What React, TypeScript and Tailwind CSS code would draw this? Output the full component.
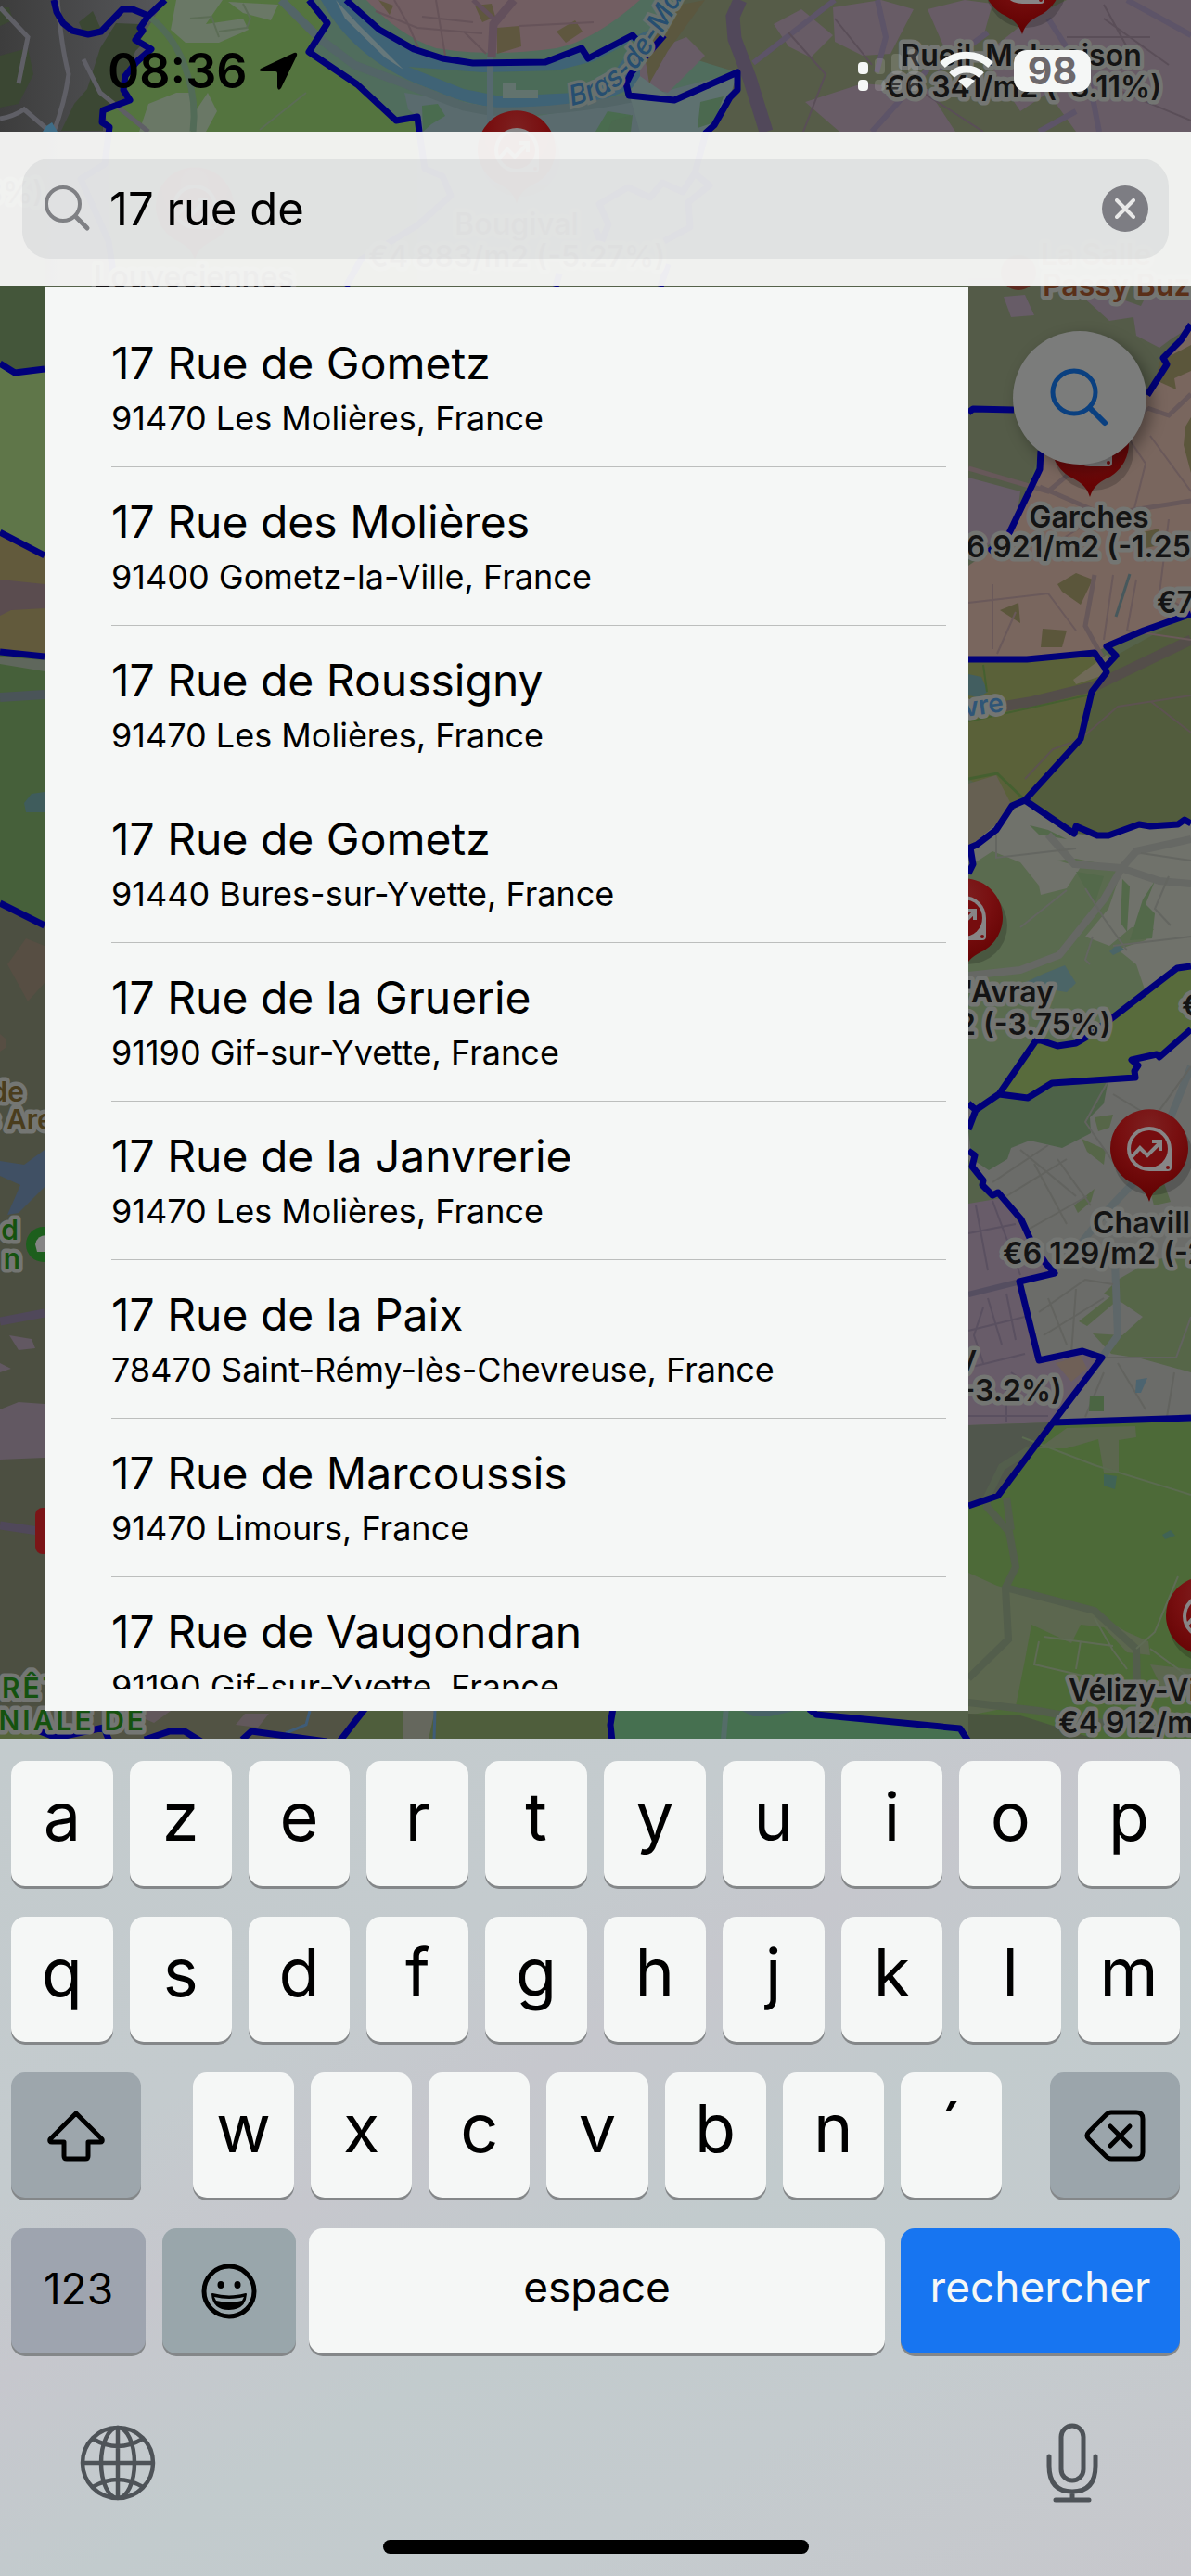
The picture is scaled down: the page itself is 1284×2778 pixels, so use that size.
import { useId, type ReactNode } from "react";

const results = [
  { street: "17 Rue de Gometz", city: "91470 Les Molières, France" },
  { street: "17 Rue des Molières", city: "91400 Gometz-la-Ville, France" },
  { street: "17 Rue de Roussigny", city: "91470 Les Molières, France" },
  { street: "17 Rue de Gometz", city: "91440 Bures-sur-Yvette, France" },
  { street: "17 Rue de la Gruerie", city: "91190 Gif-sur-Yvette, France" },
  { street: "17 Rue de la Janvrerie", city: "91470 Les Molières, France" },
  { street: "17 Rue de la Paix", city: "78470 Saint-Rémy-lès-Chevreuse, France" },
  { street: "17 Rue de Marcoussis", city: "91470 Limours, France" },
  { street: "17 Rue de Vaugondran", city: "91190 Gif-sur-Yvette, France" },
];

function Pin({ x, y }: { x: number; y: number }) {
  return (
    <g transform={`translate(${x} ${y})`}>
      <ellipse cx="4" cy="8" rx="43" ry="42" fill="#000" opacity="0.18" />
      <path
        d="M0 57C-4 44-12 40-22 35A42 42 0 1 1 22 35C12 40 4 44 0 57Z"
        fill="url(#pin-fill)"
      />
      <path
        d="M0-24A24 24 0 1 0 0 24H20Q24 24 24 20V0A24 24 0 0 0 0-24Z"
        fill="#878586"
      />
      <circle r="20" fill="#760d0f" />
      <circle cx="20" cy="20" r="2" fill="#760d0f" />
      <path
        d="M-20 10L-10-1L-2 7L12-7M3-8H12V2"
        fill="none"
        stroke="#878586"
        strokeWidth="4"
      />
    </g>
  );
}

type LabelProps = {
  x: number;
  y: number;
  anchor?: "start" | "middle" | "end";
  color?: string;
  size?: number;
  rotate?: number;
  halo?: string;
  children: ReactNode;
};

function Label({ x, y, anchor = "start", color = "#141414", size = 32, rotate = 0, halo = "#747673", children }: LabelProps) {
  return (
    <text
      x={x}
      y={y}
      textAnchor={anchor}
      fontSize={size}
      fontWeight="600"
      fill={color}
      stroke={halo}
      strokeWidth="9"
      strokeLinejoin="round"
      paintOrder="stroke"
      transform={`rotate(${rotate} ${x} ${y})`}
    >
      {children}
    </text>
  );
}

function MapBackground() {
  return (
    <svg
      viewBox="0 0 1284 1875"
      preserveAspectRatio="xMidYMin slice"
      className="absolute inset-0 h-full w-full"
      aria-hidden="true"
    >
      <defs>
        <radialGradient id="pin-fill" cx="0.5" cy="0.2" r="0.8">
          <stop offset="0" stopColor="#7d2020" />
          <stop offset="0.45" stopColor="#780f10" />
          <stop offset="1" stopColor="#600000" />
        </radialGradient>
        <linearGradient id="west" x1="0" x2="1" y1="0" y2="0">
          <stop offset="0" stopColor="#3d3d3d" />
          <stop offset="1" stopColor="#56575a" />
        </linearGradient>
        <path id="river-name" d="M616 114Q660 106 688 72T742 -16" />
      </defs>
      <rect width="1284" height="1875" fill="#55624a" />

      {/* north-west: town and forest */}
      <path d="M0 0H180L150 45L163 53L133 90L140 108L111 119L118 137V308H0Z" fill="url(#west)" />
      <path d="M0 60L30 52L36 80L20 112L0 116ZM108 52L125 25L150 26L156 45L146 55L133 92L140 108L111 119V141H66L80 112L94 96ZM85 24L100 12L110 34L92 40ZM0 8H10L14 22L0 28Z" fill="#3b4733" />
      <path d="M178 0H333L353 25L333 56L385 91L427 130L450 126V308H118V137L111 119L140 108L133 90L163 53L150 45Z" fill="#54743f" />
      <path d="M190 0H240L222 26L262 20L268 32L236 46H200L184 32ZM246 2L300 5L292 22L262 14ZM190 100H206V142H150L160 112ZM212 118L224 100L234 120L222 142H208Z" fill="#6a7866" />
      <path d="M262 4L270 20L266 30L236 34M330 100L280 140M205 20L228 18L236 40" fill="none" stroke="#5c6d56" strokeWidth="2" />
      <path d="M62 0Q66 50 74 80Q70 110 58 142M0 128Q14 126 26 118L54 142M90 64L108 100L160 142M0 8L30 40L20 90" fill="none" stroke="#5f5f66" strokeWidth="5" />
      <path d="M160 17Q190 40 202 80Q212 110 208 142" fill="none" stroke="#526b57" strokeWidth="7" />
      <path d="M50 136L56 132L62 142H46Z" fill="#3f6d87" />

      {/* the Seine and its island */}
      <path d="M333 0L353 25L333 56L385 91L427 130L450 126V200H800V0Z" fill="#506d5d" />
      <path d="M436 100L500 110L580 125L680 108L795 78L770 135L740 200H452L450 126L440 118Z" fill="#5a6b6e" />
      <path d="M455 114L472 112L480 125L465 134L456 142ZM510 82L560 80L600 92L570 106L530 102ZM655 120L680 124L676 142H642Z" fill="#4a6c4f" />
      <path d="M346 0H373L409 32L446 53L477 63L510 68L588 67L627 52L634 63L700 32L735 -5H775Q735 55 705 80Q660 112 600 118Q520 122 470 98Q385 70 346 0Z" fill="#3f6376" />
      <path d="M440 72L520 78L600 76L640 66L690 40L660 80L620 100L540 104L500 96Z" fill="#4b6b58" />
      <path d="M362 0L385 25L435 75L415 62L372 20Z" fill="#66787b" />
      <path d="M395 0Q430 38 470 52Q530 62 600 52Q640 44 690 0Z" fill="#725e62" />
      <path d="M512 6L530 4L534 18L520 24ZM536 30L560 28L562 50L536 58ZM600 34L620 22L628 34L610 46ZM408 0L424 6L420 16Z" fill="#5f573f" />
      <path d="M425 0L440 26L452 54M455 18L510 24M470 0L480 60M500 34L524 58M560 28L640 24M405 12L450 30L520 36" fill="none" stroke="#665359" strokeWidth="2" />
      <path d="M554 0L532 26L530 62" fill="none" stroke="#63505c" strokeWidth="9" />
      <path d="M510 0L534 22" fill="none" stroke="#63505c" strokeWidth="5" />
      <path d="M303 0L345 42L382 70L430 88L500 115L528 120Q600 122 680 106" fill="none" stroke="#536567" strokeWidth="9" />
      <path d="M528 62V142" fill="none" stroke="#56696f" strokeWidth="6" />
      <path d="M542 90H556V97H580V106H542Z" fill="#62736e" />

      {/* north-east suburbs */}
      <path d="M735 0H1284V142H765L795 78L720 55Z" fill="#565c48" />
      <path d="M834 26L864 10L898 38L874 62L850 50ZM898 8L950 0L985 10L960 58L930 60L900 45ZM868 110L930 90L1000 96L1030 142H905ZM1000 10L1040 0L1070 4L1060 40L1020 56ZM1110 20L1150 0H1284V142H1160L1130 100L1100 120L1060 60ZM690 60L740 40L760 60L720 100L690 92Z" fill="#685c66" />
      <path d="M693 48L735 5L760 0L720 55L700 90Z" fill="#5b573f" />
      <path d="M678 100L690 82L727 108L795 78L787 105L770 135L761 143H690Z" fill="#5e7170" />
      <path d="M660 130L682 124L680 142H655ZM755 110L780 104L770 132L752 138Z" fill="#4b694f" />
      <path d="M798 0L790 18L792 42L808 84L826 142" fill="none" stroke="#51485a" strokeWidth="15" />
      <path d="M812 68L900 0M946 0L955 40L945 78M1130 20L1175 90L1185 142M1000 75L940 142M1065 35L1010 75M1215 0L1284 38M1160 120L1120 142" fill="none" stroke="#5d5468" strokeWidth="6" />
      <path d="M850 35L890 80L866 142M900 20L940 70M980 90L1060 142M1190 5L1220 60M1150 40H1240M1190 20L1260 70M1200 95L1284 130" fill="none" stroke="#5a4e58" strokeWidth="2" />

      {/* western strip beside the results */}
      <path d="M0 280H48V398L16 402L0 392Z" fill="#44563a" />
      <path d="M0 392L16 402L48 398V599L0 574Z" fill="#5f7649" />
      <path d="M0 574L48 599V710L0 703Z" fill="#625a3c" />
      <path d="M0 625L48 630V656L12 658L0 664Z" fill="#5a4c4f" />
      <path d="M0 706L48 712V998L0 974Z" fill="#46603a" />
      <path d="M0 708L48 712V724L0 716Z" fill="#5f675c" />
      <path d="M0 752L48 749" stroke="#4a5458" strokeWidth="10" />
      <path d="M26 866L34 856L48 854V876H28Z" fill="#3f5c5c" />
      <path d="M0 974L48 998V1875H0Z" fill="#4c4f41" />
      <path d="M8 1040L28 1012L48 1020V1060L30 1080ZM0 1115L6 1120V1130L0 1134Z" fill="#574e43" />
      <path d="M0 1252L26 1256L48 1240V1280L20 1308L8 1310L22 1278L0 1268Z" fill="#405064" />
      <path d="M10 1440L34 1444L38 1454L20 1456ZM0 1520L20 1512L48 1514V1572L0 1574ZM0 1470L12 1476L0 1480Z" fill="#625862" />
      <path d="M0 1425L48 1416M0 1645L48 1652" stroke="#50485a" strokeWidth="9" />
      <circle cx="47" cy="1342" r="19" fill="#1d5f1d" />
      <path d="M38 1342Q40 1332 50 1332V1350H40Z" fill="#858585" />
      <rect x="38" y="1626" width="40" height="50" rx="8" fill="#7b1517" />

      {/* south strip */}
      <path d="M0 1840H394L366 1875H0Z" fill="#525344" />
      <path d="M394 1840L366 1875H660L661 1840Z" fill="#4f5e3c" />
      <path d="M435 1840H470L462 1875H434Z" fill="#65675d" />
      <path d="M661 1840H872L890 1852L1035 1866L1043 1875H658Z" fill="#467050" />
      <path d="M800 1845H856L830 1851H812Z" fill="#476266" />
      <path d="M783 1840L780 1875" stroke="#546d68" strokeWidth="6" />
      <path d="M154 1845H184L166 1858L152 1852ZM254 1860L264 1848H290L278 1863Z" fill="#62585c" />
      <path d="M334 1845L330 1860L308 1869M469 1845L468 1875M0 1840L20 1862" fill="none" stroke="#3f5c78" strokeWidth="3" />
      <path d="M0 1862L30 1868L60 1875H0Z" fill="#55643a" />

      {/* eastern column */}
      <path d="M1044 300H1284V440L1237 426L1217 460L1122 486L1088 575L1044 610Z" fill="#545b48" />
      <path d="M1165 318L1190 316L1230 330L1240 310H1284V352L1262 366L1250 375L1225 362L1222 342L1196 346ZM1082 320L1105 318L1115 340L1090 342ZM1044 515L1100 530L1096 560L1088 575L1044 600Z" fill="#675c67" />
      <path d="M1237 426L1258 393L1254 386L1284 350V662L1193 697L1180 704L1107 711H1044V610L1066 595L1088 575L1121 506L1122 486Z" fill="#79665e" />
      <path d="M1250 390L1284 372V400L1266 408L1268 420L1246 410ZM1278 460L1284 450V510L1276 480ZM1140 630L1160 618L1178 625L1165 652L1145 638ZM1078 658L1098 650L1100 672ZM1124 678L1150 680L1145 698H1122ZM1228 575L1250 570V588L1230 592Z" fill="#5b563b" />
      <path d="M1044 711L1107 711L1180 704L1191 720L1193 725L1177 746L1165 797L1105 863L1091 869L1044 840Z" fill="#5a6139" />
      <path d="M1193 725L1203 707L1284 662V888L1228 889L1183 901L1158 899L1105 863L1165 797L1177 746Z" fill="#525c3d" />
      <path d="M1157 733L1193 706L1200 712L1190 728L1160 738Z" fill="#706a58" />
      <path d="M1044 727L1058 730L1065 746L1055 752L1044 750Z" fill="#425e60" />
      <path d="M1044 768L1110 757L1180 740L1284 690" fill="none" stroke="#544e4a" strokeWidth="11" />
      <path d="M1044 778L1180 748M1060 717L1064 746" fill="none" stroke="#456030" strokeWidth="2" />
      <path d="M1237 440L1130 530L1044 505M1121 525L1190 555L1284 540M1180 620L1170 675L1188 708M1237 440L1260 448L1284 425" fill="none" stroke="#67585a" strokeWidth="5" />
      <path d="M1215 470L1235 500L1220 560M1240 470L1284 530M1070 630V700M1044 650L1130 640L1160 680M1200 620L1190 690M1225 625L1215 680L1284 690M1130 590L1180 560M1260 560L1250 640L1284 660M1095 660L1075 705" fill="none" stroke="#6a595a" strokeWidth="2" />
      <path d="M1165 797L1205 762L1284 750M1240 756L1284 790M1105 840L1135 808L1165 797" fill="none" stroke="#5d5351" strokeWidth="2" />
      <path d="M1218 619L1203 665" stroke="#47585c" strokeWidth="3" />
      <path d="M1044 840L1075 834L1105 863" fill="none" stroke="#456030" strokeWidth="3" />
      <path d="M1044 845L1074 836L1091 869L1074 895L1053 911L1044 914Z" fill="#666052" />

      <path d="M1044 914L1105 863L1158 899L1183 901L1228 889L1284 888V1045L1269 1044L1200 1097L1140 1128L1117 1122L1077 1180L1052 1197L1044 1190Z" fill="#70726b" />
      <path d="M1044 935L1070 918L1100 930L1120 955L1122 965L1150 958L1165 935L1140 928L1160 926L1210 936L1195 980L1170 1010L1196 1020L1220 1000L1244 1002L1235 1014L1205 1024L1225 1040L1235 1070L1180 1118L1140 1128L1117 1122L1077 1180L1052 1197L1044 1190Z" fill="#5a6b4f" />
      <path d="M1210 948L1218 956L1215 1005L1208 995ZM1232 970L1245 950L1235 975L1245 985L1242 1012L1218 1014ZM1110 890L1130 895L1150 905L1120 900ZM1160 940L1190 945L1180 975Z" fill="#53694a" />
      <path d="M1100 1062L1125 1050L1148 1041L1160 1060L1150 1070L1120 1065ZM1196 1026L1205 1018L1212 1024L1200 1030Z" fill="#4b6567" />
      <path d="M1044 1052L1100 1046L1142 1030L1190 970L1210 935L1225 918L1284 905M1130 900L1158 932L1208 936L1250 950L1284 953" fill="none" stroke="#666864" strokeWidth="8" />
      <path d="M1074 900V925L1160 915M1150 960L1100 1000M1170 958L1190 990L1215 1025M1178 1010L1170 1035L1175 1040M1200 1020L1284 1010M1260 945L1245 980L1262 998M1230 920L1284 928" fill="none" stroke="#646661" strokeWidth="2" />
      <path d="M1044 1190L1052 1197L1077 1180L1108 1184L1134 1168L1224 1162L1223 1155L1227 1149L1220 1143L1247 1137L1284 1110V1529L1135 1534L1120 1467L1099 1382L1137 1373L1111 1337L1101 1315L1076 1286L1070 1289L1044 1250Z" fill="#6b6c69" />
      <path d="M1077 1180L1108 1184L1134 1168L1195 1164L1190 1190L1175 1205L1176 1222L1145 1238L1110 1230L1090 1238L1086 1250L1066 1262L1048 1250L1044 1220L1052 1197Z" fill="#4d6248" />
      <path d="M1117 1122L1140 1128L1172 1118L1269 1044L1284 1042V1110L1250 1140L1247 1137L1220 1143L1227 1149L1223 1155L1224 1162L1134 1168L1108 1184L1077 1180Z" fill="#586b3c" />
      <path d="M1180 1205L1200 1202L1196 1216L1184 1220ZM1166 1228L1192 1240L1190 1256L1172 1242ZM1158 1300L1180 1282L1176 1296L1162 1308ZM1236 1268L1250 1262L1262 1296L1244 1300ZM1190 1395L1205 1380L1240 1360L1284 1350V1480L1230 1465L1198 1460L1178 1438L1210 1440L1232 1420L1210 1405ZM1163 1425L1220 1380L1224 1386L1172 1430Z" fill="#566648" />
      <path d="M1284 1150L1258 1215L1232 1265L1194 1305L1166 1340M1202 1360L1205 1440L1185 1468L1140 1525" fill="none" stroke="#5e6769" strokeWidth="8" />
      <path d="M1100 1240L1160 1290M1070 1275L1130 1235M1085 1290L1150 1250M1110 1325L1172 1290M1140 1250L1176 1300M1115 1255L1150 1320M1195 1165L1170 1210L1205 1260L1284 1150M1200 1180L1250 1210M1120 1415L1170 1380L1200 1385M1125 1440L1190 1400M1130 1400L1150 1450M1160 1390L1155 1460M1188 1464H1268L1284 1420M1205 1470L1235 1520M1266 1480L1258 1528M1190 1480L1170 1528" fill="none" stroke="#62635f" strokeWidth="2" />
      <path d="M1225 1488L1237 1486L1230 1502H1224Z" fill="#4c6470" />
      <path d="M1175 1505H1190V1522H1174Z" fill="#4b6543" />
      <path d="M1044 1298L1080 1292L1111 1337L1137 1373L1099 1382L1120 1467L1167 1457L1188 1464L1135 1534L1044 1537Z" fill="#685c69" />
      <path d="M1044 1396L1100 1382" stroke="#554e60" strokeWidth="6" />
      <path d="M1052 1300L1065 1370M1070 1295L1100 1375M1044 1330L1095 1320M1044 1435L1105 1420M1065 1400L1080 1450M1085 1395L1095 1445M1044 1475L1105 1460M1060 1410L1050 1440L1060 1470M1090 1480L1120 1500M1044 1527H1130M1085 1495V1534" fill="none" stroke="#5a5060" strokeWidth="2" />
      <path d="M1138 1470L1165 1462L1172 1476L1155 1490Z" fill="#6f6057" />
      <path d="M1044 1537L1135 1534L1076 1613L1044 1624Z" fill="#50564c" />
      <path d="M1135 1534L1284 1529V1875H1044V1624L1076 1613Z" fill="#4d6a38" />
      <path d="M1120 1562L1150 1540L1224 1538L1225 1550L1206 1553V1588H1190L1184 1552L1150 1562ZM1044 1696L1075 1710L1180 1740L1215 1760L1238 1770L1240 1785L1215 1782L1190 1755L1165 1752L1155 1772L1112 1752L1105 1790L1095 1840L1044 1850ZM1240 1795L1284 1800V1825H1255Z" fill="#5c674f" />
      <path d="M1102 1550L1180 1580L1284 1612" fill="none" stroke="#5b6b50" strokeWidth="2" />
      <path d="M1110 1563L1080 1582L1064 1615V1625L1088 1652L1095 1690L1084 1712L1087 1768L1044 1810M1085 1615L1090 1650M1084 1712L1180 1737L1225 1778L1226 1820M1044 1836L1120 1845L1200 1860" fill="none" stroke="#535e4c" strokeWidth="8" />
      <path d="M1120 1770L1115 1795L1180 1810M1125 1765L1200 1775M1165 1770L1160 1800M1180 1745L1200 1780L1215 1800M1225 1778L1245 1760L1270 1700M1240 1778L1284 1810" fill="none" stroke="#5f6b55" strokeWidth="2" />
      <path d="M1190 1590L1204 1592L1202 1606L1190 1602ZM1253 1655L1262 1650L1267 1656L1256 1660Z" fill="#406355" />
      <path d="M1044 1848L1100 1850L1180 1875H1044Z" fill="#4a553f" />

      {/* commune borders */}
      <g fill="none" stroke="#00007a" strokeWidth="7" strokeLinejoin="round">
        <path d="M58 0L61 13L68 25L78 33L95 37L109 34L132 10H143L160 17L178 0M160 17L151 30L154 33L146 43L163 53L147 67L135 82L133 97L140 108L111 119L110 132L118 137L113 177L87 193L117 260L122 293" />
        <path d="M333 0L353 25L333 56L385 91L427 130L450 126L452 142L458 182L477 190L486 211L450 243L389 280L373 309" />
        <path d="M373 0L409 32L446 53L477 63L510 68L588 67L627 52L634 63L682 38L693 50M716 38L681 78L675 90L678 103L727 108L795 78V97L787 105L770 135L761 143L749 187L736 207L714 197L701 213L677 202L646 220L656 242L648 262M749 187L765 200L742 218L744 245L716 260M642 247L648 262M720 285L712 309M603 295L599 309" />
        <path d="M0 392L16 402L48 398M0 574L48 599M0 703L48 708M0 974L48 998" />
        <path d="M1044 445L1049 441L1093 442M1122 486L1121 506L1088 575L1066 595M1237 426L1258 393L1254 386L1273 367L1284 350" />
        <path d="M1044 711H1107L1180 704L1191 720L1203 707L1193 697L1233 680L1284 662M1191 720L1193 725L1177 746L1165 797L1105 863L1091 869L1074 895L1053 911L1046 914L1049 932L1044 942M1105 863L1158 899L1160 891L1183 901H1195L1228 889L1240 891L1270 889L1277 884L1284 888" />
        <path d="M1284 1042L1269 1044L1200 1097L1172 1118L1160 1125L1140 1128L1122 1122H1117L1077 1180L1108 1184L1134 1168L1224 1162L1223 1155L1227 1149L1220 1143L1247 1137L1250 1140L1284 1110M1077 1180L1052 1197L1044 1190M1052 1197L1044 1218M1044 1241L1051 1246L1048 1258L1060 1273L1059 1278L1070 1289L1076 1286L1101 1315L1111 1337L1127 1362L1137 1373L1099 1382L1120 1467L1167 1457L1188 1464L1135 1534L1284 1529M1135 1534L1076 1613L1044 1624" />
        <path d="M0 1850L61 1874L112 1863L118 1878M156 1876L183 1867H199L217 1878M261 1876L271 1867L352 1878M394 1842L366 1878M661 1842L658 1860L660 1878M872 1843L880 1849L1035 1864L1044 1878" />
      </g>

      <Pin x={210} y={223} />
      <Pin x={557} y={162} />
      <Pin x={1102} y={-20} />
      <Pin x={1175} y={479} />
      <Pin x={1039} y={990} />
      <Pin x={1239} y={1239} />
      <Pin x={1299} y={1743} />
      <circle cx="1098" cy="294" r="19" fill="#5d2a20" />

      <text fontSize="30" fontWeight="500" fontStyle="italic" fill="#264e70" stroke="#68716e" strokeWidth="7" paintOrder="stroke">
        <textPath href="#river-name">Bras-de-Marly</textPath>
      </text>
      <Label x={1101} y={71} anchor="middle">Rueil-Malmaison</Label>
      <Label x={1103} y={105} anchor="middle">€6 341/m2 (-3.11%)</Label>
      <Label x={557} y={253} anchor="middle">Bougival</Label>
      <Label x={557} y={288} anchor="middle">€4 883/m2 (-5.27%)</Label>
      <Label x={209} y={310} anchor="middle">Louveciennes</Label>
      <Label x={47} y={219} anchor="end">€5 470/m2 (-3.8%)</Label>
      <Label x={1122} y={286} color="#5a2f18">La Salle</Label>
      <Label x={1124} y={319} color="#5a2f18">Passy Buzenval</Label>
      <Label x={1174} y={569} anchor="middle">Garches</Label>
      <Label x={1174} y={601} anchor="middle">€6 921/m2 (-1.25%)</Label>
      <Label x={1247} y={661}>€7 902/m2</Label>
      <Label x={1083} y={767} anchor="end" color="#2f5577" size={28} rotate={-8}>Sèvre</Label>
      <Label x={1136} y={1081} anchor="end">Ville-d'Avray</Label>
      <Label x={1198} y={1116} anchor="end">€6 812/m2 (-3.75%)</Label>
      <Label x={1274} y={1096}>€7 310/m2</Label>
      <Label x={1178} y={1330}>Chaville</Label>
      <Label x={1081} y={1363}>€6 129/m2 (-2.4%)</Label>
      <Label x={1053} y={1474} anchor="end">Viroflay</Label>
      <Label x={1145} y={1511} anchor="end">€5 701/m2 (-3.2%)</Label>
      <Label x={1152} y={1834}>Vélizy-Villacoublay</Label>
      <Label x={1141} y={1869}>€4 912/m2</Label>
      <Label x={26} y={1188} anchor="end" color="#4a3d1d" size={30}>de</Label>
      <Label x={-17} y={1218} color="#4a3d1d" size={30}>s Arena</Label>
      <Label x={20} y={1337} anchor="end" color="#15520f" size={30}>d</Label>
      <Label x={22} y={1368} anchor="end" color="#15520f" size={30}>n</Label>
      <g letterSpacing="3">
        <Label x={2} y={1831} color="#15520f" size={30}>RÊT</Label>
        <Label x={158} y={1866} anchor="end" color="#15520f" size={30}>NIALE DE</Label>
      </g>
    </svg>
  );
}

function StatusBar() {
  return (
    <div className="relative flex h-[142px] items-start justify-between pt-[53px] pr-[108px] pl-[116px]">
      <div className="flex items-center gap-3">
        <span className="text-[52px] leading-12 font-semibold text-black">08:36</span>
        <svg viewBox="0 0 42 42" className="size-[42px]" aria-hidden="true">
          <path d="M2 18L38 1Q42 0 41 4L24 39Q21 43 20 38V23Q20 21 18 21H4Q-1 21 2 18Z" fill="#000" />
        </svg>
      </div>
      <div className="flex items-center">
        <svg viewBox="0 0 66 46" className="mr-[22px] h-[46px] w-[66px]" aria-label="Signal" role="img">
          <g fill="#f5f7f6">
            <rect x="0" y="14" width="11" height="13" rx="4" />
            <rect x="0" y="33" width="11" height="12" rx="4" />
            <g opacity="0.15">
              <rect x="18" y="10" width="11" height="17" rx="4" />
              <rect x="18" y="33" width="11" height="12" rx="4" />
              <rect x="36" y="5" width="11" height="22" rx="4" />
              <rect x="36" y="33" width="11" height="12" rx="4" />
              <rect x="54" y="0" width="11" height="27" rx="4" />
              <rect x="54" y="33" width="11" height="12" rx="4" />
            </g>
          </g>
        </svg>
        <svg viewBox="0 0 58 42" className="mr-[22px] h-[42px] w-[58px]" aria-label="Wi-Fi" role="img">
          <g fill="none" stroke="#f5f7f6" strokeWidth="8">
            <path d="M3 15A38 38 0 0 1 55 15" />
            <path d="M13 26A23 23 0 0 1 45 26" />
          </g>
          <path d="M20 32Q29 25 38 32L29 41Z" fill="#f5f7f6" />
        </svg>
        <span className="flex h-[45px] w-[83px] items-center justify-center rounded-[14px] bg-[#f5f7f6] text-[41px] leading-none font-bold text-[#6d686b]">
          98
        </span>
      </div>
    </div>
  );
}

function SearchBar() {
  const id = useId();
  return (
    <header className="relative bg-[#f7f7f6]/96 px-6 py-[29px]">
      <div className="flex h-[108px] items-center rounded-[30px] bg-[#767c80]/12 pr-[22px] pl-6">
        <label htmlFor={id} aria-label="Rechercher une adresse">
          <svg viewBox="0 0 50 50" className="size-[50px]" fill="none" stroke="#7f8084" strokeLinecap="round" aria-hidden="true">
            <circle cx="20" cy="20" r="18" strokeWidth="4" />
            <path d="M34 34L46 46" strokeWidth="5" />
          </svg>
        </label>
        <input
          id={id}
          type="text"
          defaultValue="17 rue de"
          className="ml-5 min-w-0 flex-1 bg-transparent pt-0.5 text-[49px] leading-15 text-black outline-none"
        />
        <button type="button" aria-label="Effacer" className="flex size-[50px] items-center justify-center rounded-full bg-[#7d7d83]">
          <svg viewBox="0 0 22 22" className="size-[22px]" stroke="#e8e8e8" strokeWidth="4" strokeLinecap="round" aria-hidden="true">
            <path d="M2 2L20 20M20 2L2 20" />
          </svg>
        </button>
      </div>
    </header>
  );
}

function Results() {
  return (
    <div className="relative mt-px mr-60 mb-[30px] ml-12 bg-[#f5f7f6] py-6 pr-6 pl-[72px]">
      <ul className="h-[1488px] overflow-hidden">
        {results.map((result, i) => (
          <li key={i} className="border-b border-[#bcbebd]">
            <button type="button" className="flex h-[170px] w-full flex-col pt-7 text-left text-black">
              <span className="text-[48px] leading-[62px]">{result.street}</span>
              <span className="text-[36px] leading-[56px]">{result.city}</span>
            </button>
          </li>
        ))}
      </ul>
    </div>
  );
}

const keyBase = "flex h-[135px] min-w-0 items-center justify-center rounded-[15px] shadow-[0_3px_0_#848789]";
const lightKey = `${keyBase} flex-1 bg-[#f5f7f6]`;

function LetterKey({ letter }: { letter: string }) {
  return (
    <button type="button" className={`${lightKey} pb-4 text-[72px] leading-none text-black`}>
      {letter}
    </button>
  );
}

function Keyboard() {
  return (
    <section
      aria-label="Clavier"
      className="bg-[#c4cacd] bg-[linear-gradient(150deg,#c3cbcd_0%,#c4cbce_30%,#c6c7cd_42%,#c2cbcd_58%,#c4cbce_75%,#c7c7cc_100%)] px-3 pt-6"
    >
      <div className="flex flex-col gap-[33px]">
        <div className="flex gap-[18px]">
          {"azertyuiop".split("").map((l) => <LetterKey key={l} letter={l} />)}
        </div>
        <div className="flex gap-[18px]">
          {"qsdfghjklm".split("").map((l) => <LetterKey key={l} letter={l} />)}
        </div>
        <div className="flex">
          <button type="button" aria-label="Majuscule" className={`${keyBase} w-[140px] bg-[#9da6ac]`}>
            <svg viewBox="0 0 64 56" className="h-14 w-16" fill="none" stroke="#000" strokeWidth="5" strokeLinejoin="round" aria-hidden="true">
              <path d="M32 4L60 32Q61 35 58 35H45V50Q45 53 42 53H22Q19 53 19 50V35H6Q3 35 4 32Z" />
            </svg>
          </button>
          <div className="mr-[52px] ml-14 flex flex-1 gap-[18px]">
            {"wxcvbn´".split("").map((l) => <LetterKey key={l} letter={l} />)}
          </div>
          <button type="button" aria-label="Supprimer" className={`${keyBase} w-[140px] bg-[#9ba5ab]`}>
            <svg viewBox="0 0 66 56" className="h-14 w-[66px]" fill="none" stroke="#000" strokeWidth="5" strokeLinejoin="round" strokeLinecap="round" aria-hidden="true">
              <path d="M29 3H56Q63 3 63 10V46Q63 53 56 53H29Q26 53 23 50L5 32Q1 28 5 24L23 6Q26 3 29 3Z" />
              <path d="M28 18L49 39M49 18L28 39" />
            </svg>
          </button>
        </div>
        <div className="flex">
          <button type="button" className={`${keyBase} mr-[18px] w-[145px] bg-[#9ea4af] pb-1 text-[46px] text-black`}>
            123
          </button>
          <button type="button" aria-label="Émojis" className={`${keyBase} mr-3.5 w-36 bg-[#99a6ab]`}>
            <svg viewBox="0 0 60 60" className="size-[60px]" aria-hidden="true">
              <circle cx="30" cy="30" r="27" fill="none" stroke="#000" strokeWidth="5" />
              <ellipse cx="21" cy="23" rx="3.5" ry="4" />
              <ellipse cx="39" cy="23" rx="3.5" ry="4" />
              <path d="M12 33Q30 38 48 33Q47 49 30 49T12 33Z" stroke="#000" strokeWidth="2" strokeLinejoin="round" />
              <path d="M14 36Q30 40 46 36L44 40Q30 43 16 40Z" fill="#99a6ab" />
            </svg>
          </button>
          <button type="button" className={`${lightKey} mr-[17px] pb-2 text-[46px] text-black`}>
            espace
          </button>
          <button type="button" className={`${keyBase} w-[301px] bg-[#1775f1] pb-2 text-[46px] text-[#f5f7f6]`}>
            rechercher
          </button>
        </div>
      </div>
      <div className="flex items-center justify-between px-[74px] pt-[75px]">
        <button type="button" aria-label="Changer de langue">
          <svg viewBox="0 0 82 82" className="size-[82px]" fill="none" stroke="#4e5358" strokeWidth="4.5" aria-hidden="true">
            <circle cx="41" cy="41" r="38" />
            <ellipse cx="41" cy="41" rx="18" ry="38" />
            <path d="M41 3V79M3 41H79M14 15Q41 31 68 15M14 67Q41 51 68 67" />
          </svg>
        </button>
        <button type="button" aria-label="Dictée" className="mr-3.5">
          <svg viewBox="0 0 56 86" className="h-[86px] w-14" fill="none" stroke="#4e5358" strokeWidth="5" strokeLinecap="round" aria-hidden="true">
            <rect x="16" y="3" width="24" height="59" rx="12" />
            <path d="M3 36V46Q3 74 28 74T53 46V36M28 74V83M10 83H46" />
          </svg>
        </button>
      </div>
      <div className="mx-auto mt-[40px] mb-6 h-[15px] w-[459px] rounded-full bg-black" />
    </section>
  );
}

export default function App() {
  return (
    <main className="flex min-h-screen flex-col font-['Inter',sans-serif]">
      <section className="relative flex-1 overflow-hidden">
        <MapBackground />
        <button
          type="button"
          aria-label="Rechercher sur la carte"
          className="absolute top-[357px] right-12 flex size-36 items-center justify-center rounded-full bg-[#7b7c7b] shadow-[6px_6px_16px_rgba(0,0,0,0.35)]"
        >
          <svg viewBox="0 0 64 64" className="size-16" fill="none" stroke="#0a4080" strokeLinecap="round" aria-hidden="true">
            <circle cx="26" cy="26" r="23" strokeWidth="5" />
            <path d="M43 43L59 59" strokeWidth="6" />
          </svg>
        </button>
        <StatusBar />
        <SearchBar />
        <Results />
      </section>
      <Keyboard />
    </main>
  );
}
